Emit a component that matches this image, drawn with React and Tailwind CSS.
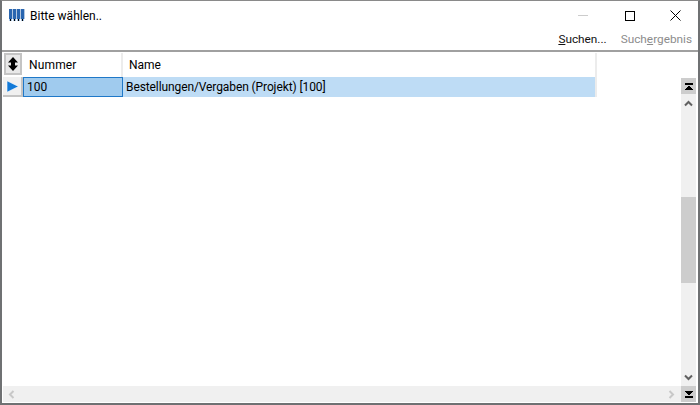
const font = { fontFamily: 'Roboto, "Noto Sans", sans-serif' };

function TitleIcon() {
  return (
    <svg width="16" height="14" viewBox="0 0 16 14" shapeRendering="crispEdges">
      {[0, 4, 8, 12].map((x) => (
        <g key={x}>
          <rect x={x} y="0" width="3" height="10" fill="#2a66b0" />
          <rect x={x + 3} y="0" width="1" height="10" fill="#b4c8e0" />
          <rect x={x} y="10" width="3" height="2" fill="#a9c6e6" />
          <rect x={x + 1} y="10" width="1" height="2" fill="#000" />
        </g>
      ))}
    </svg>
  );
}

function EndArrow({ flip }) {
  return (
    <svg width="8" height="7" viewBox="0 0 8 7" shapeRendering="crispEdges" className={flip ? "rotate-180" : ""}>
      <rect x="0" y="0" width="8" height="2" fill="#000" />
      <path d="M4 2 L8 7 L0 7 Z" fill="#000" />
    </svg>
  );
}

function Chevron({ rot, color }) {
  return (
    <svg width="9" height="7" viewBox="0 0 9 7" style={{ transform: `rotate(${rot}deg)` }}>
      <path d="M1 5.5 L4.5 2 L8 5.5" fill="none" stroke={color} strokeWidth="2" />
    </svg>
  );
}

export default function App() {
  return (
    <div className="w-[700px] h-[405px] bg-white flex flex-col border-2 border-[#6f7173] border-t-[#8a8a8a] border-t-1 overflow-hidden text-[12px] text-black" style={font}>
      <div className="h-[29px] flex items-center pl-[7px] shrink-0">
        <TitleIcon />
        <span className="ml-[5px] leading-none">Bitte wählen..</span>
        <div className="ml-auto flex items-center">
          <div className="w-[46px] flex justify-center"><div className="w-[10px] h-px bg-[#cccccc]" /></div>
          <div className="w-[46px] flex justify-center pl-[2px]"><div className="w-[10px] h-[10px] border border-black" /></div>
          <div className="w-[46px] flex justify-center">
            <svg width="11" height="11" viewBox="0 0 11 11"><path d="M0.5 0.5 L10.5 10.5 M10.5 0.5 L0.5 10.5" stroke="#000" strokeWidth="1" /></svg>
          </div>
        </div>
      </div>
      <div className="h-[20px] flex items-center justify-end shrink-0 pr-[6px] gap-[14px] leading-none text-[11.8px]">
        <span className="text-[#111]"><u>S</u>uchen...</span>
        <span className="text-[#8c8c8c]">Such<u>e</u>rgebnis</span>
      </div>
      <div className="flex-1 flex flex-col border-t-2 border-[#a0a0a0] min-h-0">
        <div className="flex-1 flex min-h-0">
          <div className="flex-1 pl-px pt-[1px]">
            <div className="flex h-[24px] w-[594px]">
              <div className="w-[18px] h-[22px] ml-px mr-px bg-[#e8e8e8] border-2 border-[#c4c4c4] flex items-center justify-center shrink-0">
                <svg width="10" height="14" viewBox="0 0 10 14"><path d="M5 0 L10 5.5 L0 5.5 Z M5 14 L10 8.5 L0 8.5 Z" fill="#000" /><rect x="3" y="4" width="4" height="6" fill="#000" /></svg>
              </div>
              <div className="w-[100px] pl-[6px] flex items-center border-r-2 border-[#ececec] shrink-0 tracking-[0.15px]">Nummer</div>
              <div className="flex-1 pl-[6px] flex items-center border-r-2 border-[#ececec]">Name</div>
            </div>
            <div className="flex h-[20px] w-[594px]">
              <div className="w-[20px] bg-[#f0f0f0] border-r-2 border-b-2 border-[#c4c4c4] flex items-center justify-center shrink-0">
                <svg width="13" height="13" viewBox="0 0 13 13"><path d="M1 0.8 L12.5 6.5 L1 12.2 Z" fill="#1179d8" stroke="#ffffff" strokeWidth="0.6" /></svg>
              </div>
              <div className="w-[100px] bg-[#a0cbee] border border-[#1f78c8] pl-[3px] flex items-center shrink-0 leading-none">100</div>
              <div className="flex-1 bg-[#bedcf5] pl-[3px] flex items-center leading-none border-r-2 border-[#ececec] tracking-[-0.1px]">Bestellungen/Vergaben (Projekt) [100]</div>
            </div>
          </div>
          <div className="w-[15px] mr-[2px] shrink-0 pt-[26px] flex flex-col">
            <div className="h-[16px] bg-[#cdcdcd] flex items-center justify-center"><EndArrow /></div>
            <div className="flex-1 bg-[#f0f0f0] flex flex-col min-h-0">
              <div className="h-[18px] flex items-center justify-center"><Chevron rot={0} color="#606060" /></div>
              <div className="h-[85px]" />
              <div className="h-[86px] bg-[#cdcdcd]" />
              <div className="flex-1" />
              <div className="h-[16px] pb-[2px] flex items-center justify-center"><Chevron rot={180} color="#606060" /></div>
            </div>
          </div>
        </div>
        <div className="h-[17px] flex shrink-0 pl-px pb-px">
          <div className="flex-1 bg-[#f0f0f0] flex items-center justify-between pl-[4px] pr-[5px]">
            <Chevron rot={-90} color="#c8c8c8" />
            <Chevron rot={90} color="#c8c8c8" />
          </div>
          <div className="w-[15px] mr-[2px] bg-[#cdcdcd] flex items-center justify-center"><EndArrow flip /></div>
        </div>
      </div>
    </div>
  );
}
